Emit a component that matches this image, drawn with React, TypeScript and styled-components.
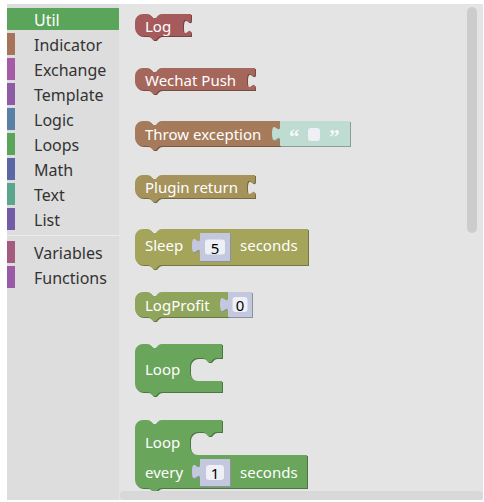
import { type ReactNode } from 'react'
import styled, { createGlobalStyle } from 'styled-components'

const GlobalStyle = createGlobalStyle`
  html, body {
    margin: 0;
    padding: 0;
    background: #ffffff;
  }
  body {
    font-family: "Noto Sans", "Liberation Sans", sans-serif;
  }
`

interface Category {
  name: string
  color: string
  selected?: boolean
  sepBefore?: boolean
}

const CATEGORIES: Category[] = [
  { name: 'Util', color: '#5ba55b', selected: true },
  { name: 'Indicator', color: '#a5745b' },
  { name: 'Exchange', color: '#a55ba5' },
  { name: 'Template', color: '#8e5ba5' },
  { name: 'Logic', color: '#5b80a5' },
  { name: 'Loops', color: '#5ba55b' },
  { name: 'Math', color: '#5b67a5' },
  { name: 'Text', color: '#5ba58c' },
  { name: 'List', color: '#745ba5' },
  { name: 'Variables', color: '#a55b80', sepBefore: true },
  { name: 'Functions', color: '#995ba5' },
]

// blockly geras path pieces
const NOTCH_RIGHT = 'c 3,0 4.5,2 6,4 l 3,0 c 1.5,-2 3,-4 6,-4'
const NOTCH_LEFT = 'c -3,0 -4.5,2 -6,4 l -3,0 c -1.5,-2 -3,-4 -6,-4'
const TAB_DOWN = 'c 0,10 -8,-8 -8,7.5 s 8,-2.5 8,7.5'
const TAB_UP = 'c 0,-10 -8,8 -8,-7.5 s 8,2.5 8,-7.5'

const stmtPath = (w: number, h: number, ext: boolean): string =>
  `M 0,8 A 8,8 0 0 1 8,0 H 12 ${NOTCH_RIGHT} H ${w} ` +
  (ext ? `V 5 ${TAB_DOWN} ` : '') +
  `V ${h} H 27 ${NOTCH_LEFT} H 8 A 8,8 0 0 1 0,${h - 8} Z`

const cPath = (topW: number, w: number, h: number, ta: number, ob: number, inner: number): string =>
  `M 0,8 A 8,8 0 0 1 8,0 H 12 ${NOTCH_RIGHT} H ${topW} V ${ta} H ${inner + 27} ${NOTCH_LEFT} H ${inner + 8} ` +
  `A 8,8 0 0 0 ${inner},${ta + 8} V ${ob - 8} A 8,8 0 0 0 ${inner + 8},${ob} H ${w} V ${h} ` +
  `H 27 ${NOTCH_LEFT} H 8 A 8,8 0 0 1 0,${h - 8} Z`

const valuePath = (w: number, h: number): string =>
  `M 0,0 H ${w} V ${h} H 0 V 20 ${TAB_UP} Z`

const darken = (hex: string, f: number): string => {
  const n = parseInt(hex.slice(1), 16)
  const r = Math.round(((n >> 16) & 255) * f)
  const g = Math.round(((n >> 8) & 255) * f)
  const b = Math.round((n & 255) * f)
  return `rgb(${r}, ${g}, ${b})`
}

const Shape = ({ d, color, x = 0, y = 0 }: { d: string; color: string; x?: number; y?: number }): ReactNode => (
  <g transform={`translate(${x} ${y})`}>
    <path d={d} fill={darken(color, 0.72)} transform="translate(1 1)" />
    <path d={d} fill={color} />
  </g>
)

const NumberShadow = ({ x, y, w, h, fw, value }: { x: number; y: number; w: number; h: number; fw: number; value: string }): ReactNode => {
  const fx = x + (w - fw) / 2
  const fy = y + (h - 15) / 2
  return (
    <g>
      <Shape d={valuePath(w, h)} color="#c3c8df" x={x} y={y} />
      <FieldBox x={fx} y={fy} width={fw} height={15} rx={3} />
      <FieldText x={fx + fw / 2} y={fy + 8}>{value}</FieldText>
    </g>
  )
}

const TextShadow = ({ x, y, w, h }: { x: number; y: number; w: number; h: number }): ReactNode => (
  <g>
    <Shape d={valuePath(w, h)} color="#bedcd2" x={x} y={y} />
    <Quote x={x + 9} y={y + 23}>“</Quote>
    <FieldBox x={x + 28} y={y + 7} width={12} height={13} rx={3} />
    <Quote x={x + 49} y={y + 23}>”</Quote>
  </g>
)

const FlyoutBlocks = (): ReactNode => (
  <>
    <BlockSvg $top={0} width={60} height={29}>
      <Shape d={stmtPath(56, 22, true)} color="#a55b5b" />
      <Label x={10} y={12}>Log</Label>
    </BlockSvg>

    <BlockSvg $top={25} width={124} height={29}>
      <Shape d={stmtPath(120, 22, true)} color="#a5675b" />
      <Label x={10} y={12}>Wechat Push</Label>
    </BlockSvg>

    <BlockSvg $top={24} width={220} height={31}>
      <Shape d={stmtPath(145, 25, true)} color="#a57b5b" />
      <Label x={10} y={12.5}>Throw exception</Label>
      <TextShadow x={145} y={0} w={70} h={25} />
    </BlockSvg>

    <BlockSvg $top={23} width={124} height={29}>
      <Shape d={stmtPath(120, 23, true)} color="#a5935b" />
      <Label x={10} y={12}>Plugin return</Label>
    </BlockSvg>

    <BlockSvg $top={25} width={178} height={42}>
      <Shape d={stmtPath(173, 36, false)} color="#a4a45b" />
      <Label x={10} y={16}>Sleep</Label>
      <NumberShadow x={65} y={4} w={30} h={28} fw={20} value="5" />
      <Label x={105} y={16}>seconds</Label>
    </BlockSvg>

    <BlockSvg $top={21} width={124} height={31}>
      <Shape d={stmtPath(93, 25, true)} color="#8fa55b" />
      <Label x={10} y={12.5}>LogProfit</Label>
      <NumberShadow x={93} y={0} w={24} h={25} fw={15} value="0" />
    </BlockSvg>

    <BlockSvg $top={21} width={92} height={54}>
      <Shape d={cPath(87, 87, 48, 14, 37, 55)} color="#69a55b" />
      <Label x={10} y={25}>Loop</Label>
    </BlockSvg>

    <BlockSvg $top={22} width={178} height={74}>
      <Shape d={cPath(87, 172, 68, 12, 35, 55)} color="#69a55b" />
      <Label x={10} y={22}>Loop</Label>
      <Label x={10} y={51.5}>every</Label>
      <NumberShadow x={65} y={39} w={30} h={27} fw={18} value="1" />
      <Label x={105} y={51.5}>seconds</Label>
    </BlockSvg>
  </>
)

const App = (): ReactNode => {
  return (
    <>
      <GlobalStyle />
      <Frame>
        <Toolbox>
          {CATEGORIES.map((c) => (
            <div key={c.name}>
              {c.sepBefore && <Separator />}
              <CategoryRow $selected={!!c.selected} $color={c.color}>
                <ColorBar $color={c.color} $hidden={!!c.selected} />
                <CategoryLabel $selected={!!c.selected}>{c.name}</CategoryLabel>
              </CategoryRow>
            </div>
          ))}
        </Toolbox>
        <Flyout>
          <BlockList>
            <FlyoutBlocks />
          </BlockList>
          <VScroll />
          <HScroll />
        </Flyout>
      </Frame>
    </>
  )
}

export default App

const Frame = styled.div`
  display: flex;
  margin: 4px 1px 0 7px;
  height: 496px;
`

const Toolbox = styled.div`
  width: 112px;
  flex-shrink: 0;
  background: #dddddd;
  padding-top: 4px;
  box-sizing: border-box;
`

const CategoryRow = styled.div<{ $selected: boolean; $color: string }>`
  display: flex;
  align-items: flex-start;
  height: 22px;
  margin-bottom: 3px;
  background: ${(p) => (p.$selected ? p.$color : 'transparent')};
`

const ColorBar = styled.span<{ $color: string; $hidden: boolean }>`
  width: 8px;
  height: 22px;
  flex-shrink: 0;
  background: ${(p) => (p.$hidden ? 'transparent' : p.$color)};
`

const CategoryLabel = styled.span<{ $selected: boolean }>`
  margin-left: 19px;
  padding-top: 1px;
  font-family: "Noto Sans", "Liberation Sans", sans-serif;
  font-size: 16px;
  line-height: 22px;
  color: ${(p) => (p.$selected ? '#ffffff' : '#333333')};
`

const Separator = styled.div`
  height: 1px;
  margin: 5px 0 5px;
  background: #ebebeb;
`

const Flyout = styled.div`
  position: relative;
  flex: 1;
  background: #e4e4e4;
  overflow: hidden;
`

const BlockList = styled.div`
  display: flex;
  flex-direction: column;
  align-items: flex-start;
  padding: 10px 0 0 16px;
`

const BlockSvg = styled.svg<{ $top: number }>`
  display: block;
  flex-shrink: 0;
  overflow: visible;
  margin-top: ${(p) => p.$top}px;
`

const Label = styled.text`
  font-family: "Noto Sans", "Liberation Sans", sans-serif;
  font-size: 15px;
  fill: #ffffff;
  dominant-baseline: central;
`

const FieldBox = styled.rect`
  fill: #eef0f6;
`

const FieldText = styled.text`
  font-family: "Noto Sans", "Liberation Sans", sans-serif;
  font-size: 15px;
  fill: #000000;
  text-anchor: middle;
  dominant-baseline: central;
`

const Quote = styled.text`
  font-family: "Liberation Serif", serif;
  font-size: 21px;
  font-weight: 700;
  fill: #f4faf8;
`

const VScroll = styled.div`
  position: absolute;
  top: 3px;
  right: 6px;
  width: 10px;
  height: 226px;
  border-radius: 5px;
  background: #cccccc;
`

const HScroll = styled.div`
  position: absolute;
  left: 1px;
  right: 0;
  bottom: 0;
  height: 9px;
  border-radius: 4px;
  background: #d8d8d8;
`
